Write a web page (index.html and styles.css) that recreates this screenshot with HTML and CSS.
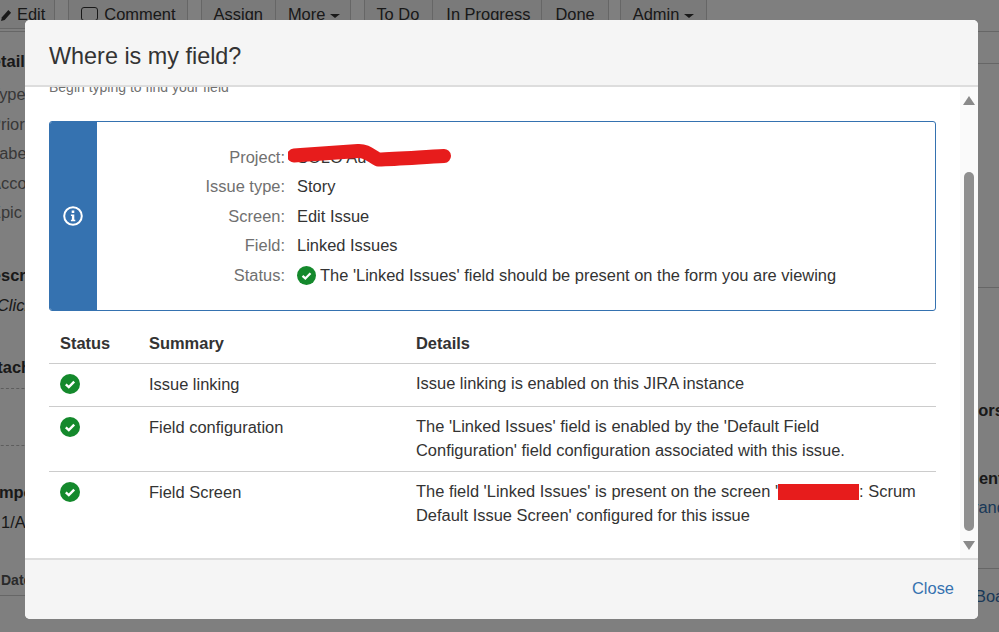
FILE: index.html
```html
<!DOCTYPE html>
<html lang="en">
<head>
<meta charset="utf-8">
<title>Where is my field?</title>
<link rel="stylesheet" href="styles.css">
</head>
<body>
<div class="page">
  <div class="toolbar">
    <div class="btn-group edge">
      <span class="btn btn-edit"><svg class="pencil" viewBox="0 0 12 14" aria-hidden="true"><path d="M0 14l1-4L8 2l3 3-7 8z"/></svg>Edit</span>
    </div>
    <div class="btn-group">
      <span class="btn btn-comment"><span class="comment-icon"></span>Comment</span>
    </div>
    <div class="btn-group">
      <span class="btn">Assign</span>
      <span class="btn btn-more">More<span class="caret"></span></span>
    </div>
    <div class="btn-group">
      <span class="btn b-todo">To Do</span>
      <span class="btn b-prog">In Progress</span>
      <span class="btn b-done">Done</span>
    </div>
    <div class="btn-group admin">
      <span class="btn">Admin<span class="caret"></span></span>
    </div>
  </div>
  <div class="panes">
    <div class="pane-left">
      <div class="head h-details">Details</div>
      <div class="field">Type</div>
      <div class="field">Priority</div>
      <div class="field">Labels</div>
      <div class="field">Account</div>
      <div class="field">Epic</div>
      <div class="head h-desc">Description</div>
      <div class="click">Click to add</div>
      <div class="head h-attach">Attachments</div>
      <div class="dash d-one"></div>
      <div class="dash d-two"></div>
      <div class="head h-comp">Components</div>
      <div class="val">1/A</div>
      <div class="head h-dates">Dates</div>
      <div class="rule-left"></div>
    </div>
    <div class="pane-right">
      <div class="rule r-one"></div>
      <div class="rule r-two"></div>
      <div class="rhead r-ors">Vendors</div>
      <div class="rhead r-ent">Agent</div>
      <div class="rlink r-and">Brand</div>
      <div class="rule r-three"></div>
      <div class="rlink r-boa">Board</div>
    </div>
  </div>
</div>
<div class="backdrop"></div>
<section class="dialog">
  <header class="dialog-head"><h2>Where is my field?</h2></header>
  <div class="dialog-body">
    <div class="content">
      <p class="hint">Begin typing to find your field</p>
      <div class="info">
        <div class="info-side">
          <svg class="info-icon" viewBox="0 0 20 20" aria-hidden="true">
            <circle cx="10" cy="10" r="8.8" fill="none" stroke="#fff" stroke-width="2"/>
            <path fill="#fff" d="M8.7 4.6h2.6v2.5H8.7zM7.9 8.4h3.4v5.4h1v1.5H7.9v-1.5h1V9.9h-1z"/>
          </svg>
        </div>
        <dl class="info-grid">
          <dt>Project:</dt>
          <dd class="project">SOLO Au<svg class="scribble" viewBox="0 0 170 30" aria-hidden="true"><path d="M6 13.5C30 12 55 10 70 9c8-.5 12 4 20 8.5 20-.5 45-2.5 66-3.5" fill="none" stroke="#e71c1c" stroke-width="14" stroke-linecap="round" stroke-linejoin="round"/></svg></dd>
          <dt>Issue type:</dt>
          <dd>Story</dd>
          <dt>Screen:</dt>
          <dd>Edit Issue</dd>
          <dt>Field:</dt>
          <dd>Linked Issues</dd>
          <dt>Status:</dt>
          <dd class="status-line"><svg class="ok ok-inline" viewBox="0 0 20 20" aria-hidden="true"><circle cx="10" cy="10" r="10" fill="#14892c"/><path d="M5.8 10.4l3 2.7 5.4-5.4" fill="none" stroke="#fff" stroke-width="2.4"/></svg>The 'Linked Issues' field should be present on the form you are viewing</dd>
        </dl>
      </div>
      <table class="checks">
        <thead>
          <tr><th class="c-status">Status</th><th class="c-summary">Summary</th><th>Details</th></tr>
        </thead>
        <tbody>
          <tr>
            <td class="cell-icon"><svg class="ok" viewBox="0 0 20 20" aria-hidden="true"><circle cx="10" cy="10" r="10" fill="#14892c"/><path d="M5.8 10.4l3 2.7 5.4-5.4" fill="none" stroke="#fff" stroke-width="2.4"/></svg></td>
            <td class="cell-summary">Issue linking</td>
            <td>Issue linking is enabled on this JIRA instance</td>
          </tr>
          <tr>
            <td class="cell-icon"><svg class="ok" viewBox="0 0 20 20" aria-hidden="true"><circle cx="10" cy="10" r="10" fill="#14892c"/><path d="M5.8 10.4l3 2.7 5.4-5.4" fill="none" stroke="#fff" stroke-width="2.4"/></svg></td>
            <td class="cell-summary">Field configuration</td>
            <td>The 'Linked Issues' field is enabled by the 'Default Field Configuration' field configuration associated with this issue.</td>
          </tr>
          <tr>
            <td class="cell-icon"><svg class="ok" viewBox="0 0 20 20" aria-hidden="true"><circle cx="10" cy="10" r="10" fill="#14892c"/><path d="M5.8 10.4l3 2.7 5.4-5.4" fill="none" stroke="#fff" stroke-width="2.4"/></svg></td>
            <td class="cell-summary">Field Screen</td>
            <td>The field 'Linked Issues' is present on the screen '<span class="redact"></span>: Scrum Default Issue Screen' configured for this issue</td>
          </tr>
        </tbody>
      </table>
    </div>
    <div class="scrollbar">
      <span class="arrow-up"></span>
      <span class="thumb"></span>
      <span class="arrow-down"></span>
    </div>
  </div>
  <footer class="dialog-foot"><a class="close" href="#">Close</a></footer>
</section>
</body>
</html>
```

FILE: styles.css
```css
* { box-sizing: border-box; }
html, body { margin: 0; padding: 0; height: 100%; overflow: hidden; }
body {
  background: #fff;
  color: #333;
  font-family: "Liberation Sans", Arial, sans-serif;
  font-size: 16.45px;
  line-height: 24px;
}
.page { height: 632px; display: flex; flex-direction: column; overflow: hidden; }

/* page behind the dialog */
.toolbar {
  display: flex;
  gap: 13px;
  height: 32px;
  border-bottom: 1px solid #ccc;
  flex: none;
}
.btn-group { display: flex; height: 31px; }
.edge { margin-left: -8px; }
.admin { margin-left: -2px; }
.btn {
  display: flex;
  align-items: center;
  height: 29px;
  padding: 0 12px;
  background: #f5f5f5;
  border: 1px solid #ccc;
  border-top: 0;
  border-left-width: 0;
  color: #333;
  white-space: nowrap;
}
.btn-group .btn:first-child { border-left-width: 1px; }
.btn-group .btn-edit { padding-left: 8px; padding-right: 9px; border-left-width: 0; }
.btn-comment { padding-right: 11px; }
.btn-more { padding-right: 10px; }
.btn-group .b-todo { padding: 0 13px 0 11px; }
.btn-group .b-prog { padding: 0 11px 0 13px; }
.btn-group .b-done { padding: 0 13px; }
.pencil { width: 11px; height: 13px; margin-right: 5px; fill: #333; }
.comment-icon {
  width: 17px; height: 14px; margin-right: 6px;
  border: 1.5px solid #333; border-radius: 3px;
}
.caret {
  width: 0; height: 0; margin-left: 5px; margin-top: 3px;
  border-left: 5px solid transparent; border-right: 5px solid transparent; border-top: 4px solid #333;
}
.panes { flex: 1; display: flex; justify-content: space-between; }
.pane-left { width: 25px; margin-left: -20px; flex: none; white-space: nowrap; }
.head { font-weight: 700; height: 20px; line-height: 20px; }
.field { height: 29.5px; line-height: 29.5px; color: #707070; padding-left: 10px; }
.h-details { margin-top: 19px; margin-bottom: 9px; }
.h-desc { margin-top: 37.5px; }
.click { font-style: italic; color: #333; height: 20px; line-height: 20px; margin-top: 10px; padding-left: 17px; }
.h-attach { margin-top: 42px; }
.dash { width: 60px; border-top: 1px dashed #bbb; }
.d-one { margin-top: 11px; }
.d-two { margin-top: 56px; }
.h-comp { margin-top: 36px; margin-left: -3px; }
.val { height: 20px; line-height: 20px; margin-top: 10px; padding-left: 21px; }
.h-dates { margin-top: 38px; padding-left: 21px; font-size: 14px; color: #555; }
.rule-left { margin-top: 5px; width: 60px; border-top: 1px solid #ccc; }

.pane-right { width: 60px; flex: none; white-space: nowrap; padding-top: 31px; }
.rule { border-top: 1px solid #ccc; }
.r-two { margin-top: 223px; }
.rhead { font-weight: 700; height: 20px; line-height: 20px; }
.r-ors { margin-top: 112px; }
.rlink { color: #3572b0; height: 20px; line-height: 20px; }
.r-ent { margin-top: 48px; margin-left: 18px; }
.r-and { margin-top: 9px; margin-left: 23px; }
.r-three { margin-top: 51px; }
.r-boa { margin-top: 17px; margin-left: 36px; }

.backdrop { position: fixed; inset: 0; background: rgba(0, 0, 0, .5); }

/* dialog */
.dialog {
  position: fixed;
  left: 25px;
  top: 20px;
  width: 953px;
  height: 599px;
  display: flex;
  flex-direction: column;
  background: #fff;
  border-radius: 5px;
  overflow: hidden;
}
.dialog-head {
  flex: none;
  height: 67px;
  padding: 0 24px;
  background: #f5f5f5;
  border-bottom: 2px solid #ddd;
  display: flex;
  align-items: center;
}
.dialog-head h2 { margin: 6px 0 0; font-size: 23.4px; font-weight: 400; line-height: 30px; color: #333; }
.dialog-body { flex: 1; min-height: 0; display: flex; }
.content { flex: 1; min-width: 0; padding: 0 24px; overflow: hidden; }
.hint { margin: -10px 0 0; height: 20px; font-size: 14px; line-height: 20px; color: #707070; }
.info {
  display: flex;
  height: 190px;
  margin-top: 24px;
  border: 1px solid #3572b0;
  border-radius: 3px;
  overflow: hidden;
}
.info-side {
  flex: none;
  width: 47px;
  padding-right: 1px;
  background: #3572b0;
  display: flex;
  align-items: center;
  justify-content: center;
}
.info-icon { width: 20px; height: 20px; }
.info-grid {
  flex: 1;
  margin: 0;
  padding-top: 1px;
  display: grid;
  grid-template-columns: 188px 1fr;
  grid-auto-rows: 29.5px;
  column-gap: 12px;
  align-content: center;
  line-height: 29.5px;
}
.info-grid dt { text-align: right; color: #707070; }
.info-grid dd { margin: 0; }
.project { position: relative; }
.scribble { position: absolute; left: -9px; top: -1px; width: 170px; height: 30px; }
.status-line { display: flex; align-items: center; white-space: nowrap; }
.ok { display: block; width: 20px; height: 20px; }
.ok-inline { width: 19px; height: 19px; margin-right: 4px; flex: none; }

.checks {
  width: 100%;
  margin-top: 20px;
  border-collapse: collapse;
  table-layout: fixed;
}
.checks th, .checks td {
  padding: 8px 18px 9px 0;
  text-align: left;
  vertical-align: top;
  line-height: 23.5px;
}
.checks th { padding-top: 1px; padding-bottom: 7.5px; font-weight: 700; border-bottom: 1px solid #ccc; }
.checks tbody tr { border-bottom: 1px solid #ccc; }
.checks tbody tr:last-child { border-bottom: 0; }
.checks th.c-status { width: 100px; padding-left: 11px; }
.c-summary { width: 267px; }
.checks .cell-icon { padding: 10px 0 0 11px; }
.checks .cell-summary { padding-top: 9px; padding-bottom: 9.5px; }
.redact {
  display: inline-block;
  width: 81px;
  height: 16px;
  vertical-align: -3px;
  background: #e71c1c;
}

.scrollbar {
  flex: none;
  width: 18px;
  background: #fafafa;
  display: flex;
  flex-direction: column;
  align-items: center;
  padding-top: 9px;
}
.arrow-up, .arrow-down {
  width: 0; height: 0;
  border-left: 6px solid transparent;
  border-right: 6px solid transparent;
}
.arrow-up { border-bottom: 9px solid #8a8a8a; }
.arrow-down { border-top: 9px solid #8a8a8a; margin-top: 10px; }
.thumb { width: 10px; height: 359px; margin-top: 67px; border-radius: 5px; background: #8f8f8f; }

.dialog-foot {
  flex: none;
  height: 61px;
  padding: 0 24px 3px;
  background: #f5f5f5;
  border-top: 2px solid #ddd;
  display: flex;
  align-items: center;
  justify-content: flex-end;
}
.close { color: #3572b0; text-decoration: none; }
```
